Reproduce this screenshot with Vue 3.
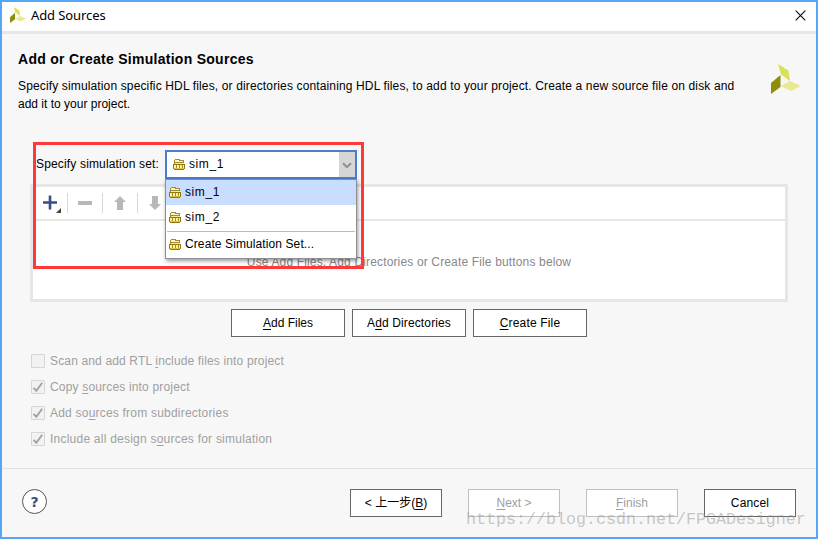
<script setup>
import { ref } from 'vue'

const options = ref([
  { label: 'Scan and add RTL |i|nclude files into project', checked: false, cls: 'o1' },
  { label: 'Copy |s|ources into project', checked: true, cls: 'o2' },
  { label: 'Add so|u|rces from subdirectories', checked: true, cls: 'o3' },
  { label: 'Include all design s|o|urces for simulation', checked: true, cls: 'o4' },
])
const actions = [
  { label: '|A|dd Files', cls: 'a1' },
  { label: 'A|d|d Directories', cls: 'a2' },
  { label: '|C|reate File', cls: 'a3' },
]
const nav = [
  { label: '< 上一步(|B|)', disabled: false, cls: 'n1' },
  { label: '|N|ext >', disabled: true, cls: 'n2' },
  { label: '|F|inish', disabled: true, cls: 'n3' },
  { label: 'Cancel', disabled: false, cls: 'n4' },
]
const sets = ['sim_1', 'sim_2']
const parts = (s) => s.split('|')
</script>

<template>
  <div class="window">
    <svg class="defs" width="0" height="0">
      <symbol id="logo" viewBox="0 0 30 30">
        <path d="M7 0 17.500 6.500 19 17 10 10.500Z" fill="#dcdf5c" />
        <path d="M0 19 9.500 11v12L0 30Z" fill="#8d8e0c" />
        <path d="M9.500 22 19 17 30 22 20 27Z" fill="#e7e995" />
      </symbol>
      <symbol id="set" viewBox="0 0 12 11">
        <g shape-rendering="crispEdges">
          <path d="M2 0h5v1h4v4H1V1h1Z" fill="#a18a35" />
          <path d="M2 1h4v1h4v1H2Z" fill="#fff6c4" />
          <path d="M2 4h9v1H2Z" fill="#f7eaa0" />
          <path d="M0 5h12v5h-1v1H1v-1H0Z" fill="#94790f" />
          <path d="M1 6h10v3H1Z" fill="#fff1a0" />
          <path d="M3 6h1v3H3ZM6 6h1v3H6ZM9 6h1v3H9Z" fill="#a88e20" />
          <path d="M1 9h10v1H1Z" fill="#dcc040" />
        </g>
      </symbol>
    </svg>

    <header class="titlebar">
      <svg class="app-icon"><use href="#logo" /></svg>
      <span class="app-title">Add Sources</span>
      <svg class="close" viewBox="0 0 11 11"><path d="M.7.7l9.600 9.600M10.300.7l-9.600 9.600" stroke="#111" stroke-width="1.200" /></svg>
    </header>

    <section class="intro">
      <div class="intro-text">
        <h1>Add or Create Simulation Sources</h1>
        <p><span class="p1">Specify simulation specific HDL files, or directories containing HDL files, to add to your project. Create a new source file on disk and</span></p>
        <p><span class="p2">add it to your project.</span></p>
      </div>
      <svg class="brand"><use href="#logo" /></svg>
    </section>

    <section class="chooser">
      <label><span class="lb">Specify simulation set:</span></label>
      <div class="combo">
        <svg class="set"><use href="#set" /></svg>
        <span class="combo-value">sim_1</span>
        <span class="drop"><svg width="10" height="7" viewBox="0 0 10 7"><path d="M1 1.200l4 4 4-4" fill="none" stroke="#8f8f8f" stroke-width="2" /></svg></span>
        <div class="popup">
          <div v-for="(s, i) in sets" :key="s" class="item" :class="{ on: i === 0 }">
            <svg class="set"><use href="#set" /></svg><span>{{ s }}</span>
          </div>
          <div class="rule"></div>
          <div class="item last"><svg class="set"><use href="#set" /></svg><span class="cs">Create Simulation Set...</span></div>
        </div>
      </div>
    </section>

    <section class="panel">
      <div class="tools">
        <div class="tool"><svg width="22" height="20" viewBox="0 0 22 20"><path d="M2 9.500h14M9 2.500v14" stroke="#354f85" stroke-width="2.600" /><path d="M20 15v5h-5Z" fill="#444" /></svg></div>
        <div class="tool"><svg width="22" height="20" viewBox="0 0 22 20"><path d="M2 10h14" stroke="#b8b8b8" stroke-width="4" /></svg></div>
        <div class="tool"><svg width="22" height="20" viewBox="0 0 22 20"><path d="M9 3l6 6h-3v8H6V9H3Z" fill="#b8b8b8" /></svg></div>
        <div class="tool"><svg width="22" height="20" viewBox="0 0 22 20"><path d="M9 17l6-6h-3V3H6v8H3Z" fill="#b8b8b8" /></svg></div>
      </div>
      <div class="empty"><span class="em">Use Add Files, Add Directories or Create File buttons below</span></div>
    </section>

    <div class="actions">
      <button v-for="a in actions" :key="a.cls"><span :class="a.cls">{{ parts(a.label)[0] }}<u>{{ parts(a.label)[1] }}</u>{{ parts(a.label)[2] }}</span></button>
    </div>

    <div class="options">
      <div v-for="o in options" :key="o.cls" class="option">
        <span class="box"><svg v-if="o.checked" width="12" height="12" viewBox="0 0 12 12"><path d="M1.500 6.800 4.300 9.700 10.200 1.800" fill="none" stroke="#a2a2a2" stroke-width="1.900" /></svg></span>
        <span :class="o.cls">{{ parts(o.label)[0] }}<u>{{ parts(o.label)[1] }}</u>{{ parts(o.label)[2] }}</span>
      </div>
    </div>

    <footer>
      <div class="help">?</div>
      <div class="nav">
        <button v-for="n in nav" :key="n.cls" :class="{ off: n.disabled }"><span :class="n.cls">{{ parts(n.label)[0] }}<u v-if="parts(n.label)[1]">{{ parts(n.label)[1] }}</u>{{ parts(n.label)[2] }}</span></button>
      </div>
    </footer>

    <div class="highlight"></div>
    <div class="watermark">https://blog.csdn.net/FPGADesigner</div>
  </div>
</template>

<style>
body { margin: 0; overflow: hidden; }
</style>

<style scoped>
* { box-sizing: border-box; }
.window { position: relative; width: 818px; height: 539px; border: 2px solid #55a5f8; background: #f7f7f7; color: #000; font: 12px/18px "Liberation Sans", "Noto Sans CJK SC", sans-serif; white-space: nowrap; overflow: hidden; display: flex; flex-direction: column; }
.defs { position: absolute; }
svg { display: block; flex: none; }
u { text-decoration: underline; text-underline-offset: 2px; text-decoration-thickness: 1px; text-decoration-skip-ink: none; }

.titlebar { height: 32px; flex: none; background: #fff; border-bottom: 3px solid #e6e6e6; display: flex; align-items: center; padding: 0 10px 3px 8px; }
.app-icon { width: 16px; height: 16px; }
.app-title { font: 13px/18px "Noto Sans", sans-serif; margin-left: 5px; letter-spacing: -.1px; flex: 1; }
.close { width: 11px; height: 11px; }

.intro { height: 116px; flex: none; display: flex; justify-content: space-between; padding: 16px 15px 0 16px; }
h1 { margin: 0 0 8px; font-size: 14px; line-height: 19px; font-weight: bold; letter-spacing: .27px; }
p { margin: 0; }
.p1 { letter-spacing: .139px; }
.brand { width: 30px; height: 30px; margin-top: 14px; }

.chooser { height: 34px; flex: none; display: flex; align-items: flex-start; padding-left: 34px; }
.chooser label { width: 129px; padding-top: 5px; }
.lb { letter-spacing: .16px; }
.combo { position: relative; width: 192px; height: 29px; flex: none; border: 2px solid #4d7bd0; background: #fff; display: flex; align-items: center; padding-left: 6px; }
.set { width: 12px; height: 11px; }
.combo-value { margin: 0 0 1px 4px; flex: 1; letter-spacing: .6px; }
.drop { width: 16px; height: 100%; background: #d6d6d6; display: flex; align-items: center; justify-content: center; padding-top: 1px; }
.popup { position: absolute; z-index: 2; left: -2px; top: 27px; width: 192px; height: 80px; background: #fff; border: 1px solid #8e8e8e; box-shadow: 1px 2px 4px rgba(0, 0, 0, .4); }
.item { height: 25px; display: flex; align-items: center; padding-left: 3px; gap: 4px; letter-spacing: .6px; }
.item span { margin-bottom: 2px; }
.item.on { background: #c9ddff; }
.cs { letter-spacing: .1px; }
.rule { height: 1px; background: #bbb; margin: 1px 1px 0; }

.panel { width: 758px; height: 118px; flex: none; margin-left: 28px; border: 3px solid #e6e6e6; background: #fff; }
.tools { height: 34px; border-bottom: 2px solid #e6e6e6; display: flex; align-items: center; }
.tool { width: 35px; height: 20px; padding-left: 8px; border-right: 1px solid #d9d9d9; }
.tool:last-child { border: 0; }
.empty { text-align: center; padding-top: 32px; color: #888; }
.em { letter-spacing: .15px; }

.actions { display: flex; gap: 7px; padding: 7px 0 0 229px; height: 35px; flex: none; }
button { height: 28px; width: 114px; border: 1px solid #666; background: #fff; padding: 0; font: inherit; color: #000; }
.a2 { letter-spacing: .13px; }
.a3 { letter-spacing: .17px; }
.n4 { letter-spacing: .15px; }
.options { padding: 11px 0 0 29px; height: 131px; flex: none; color: #a0a0a0; }
.option { height: 26px; display: flex; align-items: center; gap: 5px; }
.box { width: 14px; height: 14px; border: 1px solid #d6d6d6; border-radius: 1px; background: #f2f2f2; }
.o1 { letter-spacing: .15px; }
.o2 { letter-spacing: .17px; }
.o3 { letter-spacing: .21px; }
.o4 { letter-spacing: .23px; }

footer { flex: 1; border-top: 1px solid #e1e1e1; display: flex; justify-content: space-between; padding: 20px 20px 0 20px; }
.help { width: 25px; height: 25px; border: 1px solid #555; border-radius: 50%; background: #fff; color: #354f85; font: bold 14px/24px "DejaVu Sans", sans-serif; text-align: center; }
.nav { display: flex; gap: 26px; }
.nav button { width: 92px; }
.nav button.off { border-color: #c0c0c0; color: #a0a0a0; }

.highlight { position: absolute; z-index: 3; left: 31px; top: 140px; width: 331px; height: 127px; border: 3px solid #ff3838; }
.watermark { position: absolute; left: 464px; top: 507px; font: 16.67px/22px "Liberation Mono", monospace; color: rgba(150, 150, 140, .5); }
</style>
